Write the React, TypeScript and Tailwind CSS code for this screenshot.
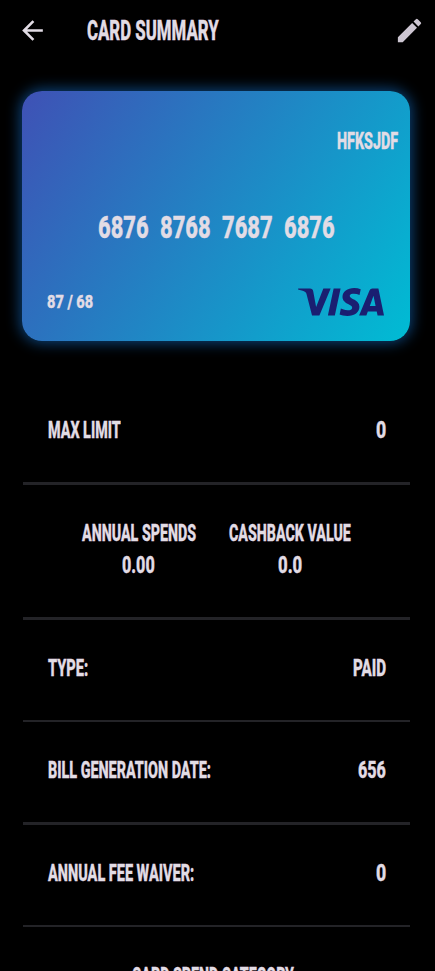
import { useLayoutEffect, useRef, useState } from "react";
import { clsx } from "clsx";
import { MdArrowBack, MdEdit } from "react-icons/md";
import { SiVisa } from "react-icons/si";

// Condenses a line of text so that it fills the width given by its class.
function Condensed({ text, className }: { text: string; className: string }) {
  const box = useRef<HTMLSpanElement>(null);
  const line = useRef<HTMLSpanElement>(null);
  const [scale, setScale] = useState(1);

  useLayoutEffect(() => {
    if (box.current && line.current) {
      setScale(box.current.clientWidth / line.current.offsetWidth);
    }
  }, [text]);

  return (
    <span ref={box} className={clsx("block shrink-0 leading-none whitespace-nowrap", className)}>
      <span
        ref={line}
        className="inline-block origin-left align-top [-webkit-text-stroke:0.4px_currentColor]"
        style={{ transform: `scaleX(${scale})` }}
      >
        {text}
      </span>
    </span>
  );
}

const label = "h-[23px] text-[23px]";

function Divider() {
  return <hr className="h-[2.5px] shrink-0 border-0 bg-[#232327]" />;
}

function Row(props: { name: string; nameWidth: string; value: string; valueWidth: string }) {
  return (
    <div className="flex h-[100px] shrink-0 items-center justify-between pr-[24.5px] pb-[2.5px] pl-[25px]">
      <Condensed text={props.name} className={clsx(label, props.nameWidth)} />
      <Condensed text={props.value} className={clsx(label, props.valueWidth)} />
    </div>
  );
}

export default function App() {
  return (
    <div className="flex h-[971px] w-[435px] flex-col overflow-hidden bg-black font-['Roboto',sans-serif] font-extrabold text-[#e2dce5]">
      <header className="flex h-[61px] shrink-0 items-center pr-[10px] pl-[17px]">
        <MdArrowBack className="size-[31px]" />
        <Condensed text="CARD SUMMARY" className="ml-[39px] h-7 w-[132px] text-[28px]" />
        <MdEdit className="ml-auto size-[31px] text-[#cdc6d2]" />
      </header>

      <section className="mx-[22px] mt-[30px] flex h-[250px] w-[388px] shrink-0 flex-col rounded-[20px] bg-[linear-gradient(122.8deg,#3f51b5,#00bcd4)] shadow-[0_0_14px_2px_#0c4379]">
        <div className="mt-[38.5px] flex justify-end pr-3">
          <Condensed text="HFKSJDF" className="h-[23px] w-[61px] text-[23px]" />
        </div>
        <div className="mt-[59.5px] ml-[75.5px] flex gap-[11px]">
          {["6876", "8768", "7687", "6876"].map((group, i) => (
            <Condensed key={i} text={group} className="h-[31px] w-[51px] text-[31px]" />
          ))}
        </div>
        <div className="mt-[43px] flex h-[32px] items-center justify-between pr-[26px] pl-[25px]">
          <Condensed text="87 / 68" className="mb-[2px] h-[19px] w-[46px] text-[19px]" />
          <SiVisa className="size-[86px] text-[#1a1f71]" />
        </div>
      </section>

      <main className="mr-[25px] ml-[22.5px] mt-[41px] flex flex-col">
        <Row name="MAX LIMIT" nameWidth="w-[73px]" value="0" valueWidth="w-[10px]" />
        <Divider />
        <div className="flex h-[132.5px] shrink-0 pt-[37px] pl-[59px]">
          <div className="flex flex-col items-center gap-[9px]">
            <Condensed text="ANNUAL SPENDS" className={clsx(label, "w-[114px]")} />
            <Condensed text="0.00" className={clsx(label, "w-[33px]")} />
          </div>
          <div className="ml-[33.5px] flex flex-col items-center gap-[9px]">
            <Condensed text="CASHBACK VALUE" className={clsx(label, "w-[122px]")} />
            <Condensed text="0.0" className={clsx(label, "w-[24px]")} />
          </div>
        </div>
        <Divider />
        <Row name="TYPE:" nameWidth="w-[40px]" value="PAID" valueWidth="w-[33px]" />
        <Divider />
        <Row name="BILL GENERATION DATE:" nameWidth="w-[163px]" value="656" valueWidth="w-[28px]" />
        <Divider />
        <Row name="ANNUAL FEE WAIVER:" nameWidth="w-[146px]" value="0" valueWidth="w-[10px]" />
        <Divider />
        <div className="flex justify-center pt-[38px] pr-[7px]">
          <Condensed text="CARD SPEND CATEGORY" className={clsx(label, "w-[162px]")} />
        </div>
      </main>
    </div>
  );
}
